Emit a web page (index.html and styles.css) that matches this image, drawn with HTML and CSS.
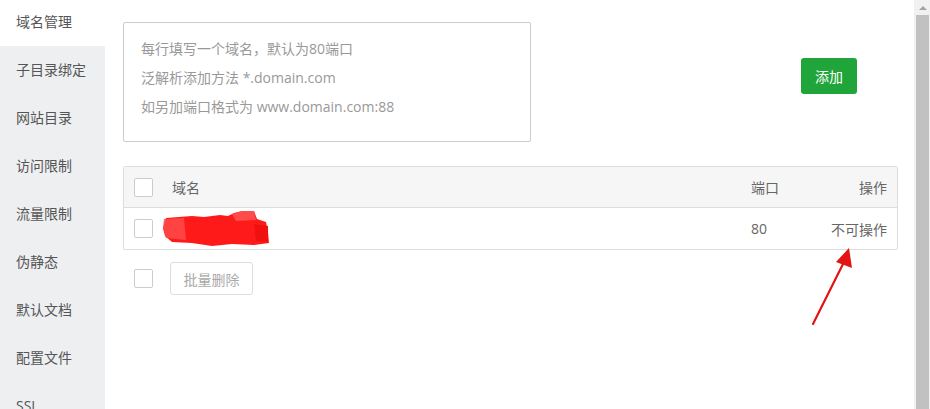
FILE: index.html
```html
<!DOCTYPE html>
<html lang="zh-CN">
<head>
<meta charset="utf-8">
<title>域名管理</title>
<link rel="stylesheet" href="styles.css">
</head>
<body>
<div class="page">
  <nav class="side">
    <div class="side-item active">域名管理</div>
    <div class="side-item">子目录绑定</div>
    <div class="side-item">网站目录</div>
    <div class="side-item">访问限制</div>
    <div class="side-item">流量限制</div>
    <div class="side-item">伪静态</div>
    <div class="side-item">默认文档</div>
    <div class="side-item">配置文件</div>
    <div class="side-item">SSL</div>
  </nav>
  <main class="main">
    <div class="add-row">
      <div class="textarea">
        <p>每行填写一个域名，默认为80端口</p>
        <p>泛解析添加方法 *.domain.com</p>
        <p>如另加端口格式为 www.domain.com:88</p>
      </div>
      <button class="btn-add">添加</button>
    </div>
    <div class="table">
      <div class="tr th">
        <span class="cb"></span>
        <span class="c-name">域名</span>
        <span class="c-port">端口</span>
        <span class="c-op">操作</span>
      </div>
      <div class="tr">
        <span class="cb"></span>
        <span class="c-name">
          <svg class="scribble" width="110" height="40" viewBox="0 0 110 40">
            <path d="M4 8 L30 6 L42 7 L58 5 L66 6 L72 3 L80 1 L92 1 L95 9 L104 12 L106 22 L107 33 L92 35 L70 34 L50 36 L30 33 L10 32 L3 26 L1 18 Z" fill="#ff1a1a"/>
            <path d="M2 9 L22 8 L24 30 L4 28 L1 18 Z" fill="#ff4a4a" opacity="0.85"/>
            <path d="M70 4 L80 1 L92 1 L94 10 L74 11 Z" fill="#ff5555" opacity="0.85"/>
            <path d="M92 14 L106 16 L106 32 L94 31 Z" fill="#f01010"/>
          </svg>
        </span>
        <span class="c-port">80</span>
        <span class="c-op">不可操作</span>
      </div>
    </div>
    <div class="batch">
      <span class="cb"></span>
      <button class="btn-batch">批量删除</button>
    </div>
    <svg class="arrow" width="60" height="90" viewBox="0 0 60 90">
      <line x1="4" y1="80" x2="36" y2="16" stroke="#e31414" stroke-width="2.2" stroke-linecap="round"/>
      <path d="M40 4 L43 24 L27 18 Z" fill="#e31414"/>
    </svg>
  </main>
  <div class="scrollbar">
    <div class="sb-up"><span class="tri"></span></div>
    <div class="sb-thumb"></div>
  </div>
</div>
</body>
</html>
```
FILE: styles.css
```css
* { box-sizing: border-box; }
html, body { margin: 0; padding: 0; }
body {
  width: 930px;
  height: 409px;
  overflow: hidden;
  font-family: "Open Sans", "Noto Sans CJK SC", sans-serif;
  font-size: 14px;
  color: #555;
  background: #fff;
}
.page {
  display: flex;
  height: 409px;
}
.side {
  width: 105px;
  flex: none;
  background: #eeeff1;
  margin-top: -2px;
}
.side-item {
  height: 48px;
  line-height: 48px;
  padding-left: 16px;
  color: #555;
  font-size: 14px;
}
.side-item.active {
  background: #fff;
}
.main {
  flex: 1;
  position: relative;
  padding: 22px 16px 0 18px;
}
.add-row {
  display: flex;
  align-items: flex-start;
}
.textarea {
  width: 408px;
  height: 120px;
  border: 1px solid #ccc;
  border-radius: 2px;
  padding: 11px 17px;
  color: #999;
  font-size: 14px;
}
.textarea p {
  margin: 0;
  line-height: 29px;
}
.btn-add {
  margin-left: 270px;
  margin-top: 36px;
  width: 56px;
  height: 36px;
  border: none;
  border-radius: 3px;
  background: #20a53a;
  color: #fff;
  font-family: inherit;
  font-size: 14px;
  padding: 0;
}
.table {
  margin-top: 24px;
  width: 775px;
  border: 1px solid #ddd;
  border-radius: 2px;
}
.tr {
  display: flex;
  align-items: center;
  height: 41px;
  padding: 0 10px;
  color: #666;
}
.tr.th {
  background: #f6f6f6;
  border-bottom: 1px solid #ddd;
}
.cb {
  width: 19px;
  height: 19px;
  border: 1px solid #ccc;
  border-radius: 2px;
  background: #fff;
  flex: none;
}
.c-name {
  flex: 1;
  margin-left: 19px;
  display: flex;
  align-items: center;
}
.scribble {
  display: block;
  margin-left: -10px;
  margin-top: 2px;
}
.c-port {
  width: 60px;
}
.c-op {
  width: 76px;
  text-align: right;
}
.batch {
  display: flex;
  align-items: center;
  margin-top: 12px;
  padding-left: 11px;
}
.btn-batch {
  margin-left: 17px;
  width: 83px;
  height: 33px;
  border: 1px solid #ddd;
  border-radius: 3px;
  background: #fff;
  color: #aaa;
  font-family: inherit;
  font-size: 14px;
  padding: 0;
}
.arrow {
  position: absolute;
  left: 704px;
  top: 244px;
}
.scrollbar {
  width: 17px;
  flex: none;
  background: #f1f1f1;
  display: flex;
  flex-direction: column;
}
.sb-up {
  height: 15px;
  display: flex;
  align-items: center;
  justify-content: center;
}
.tri {
  width: 0;
  height: 0;
  border-left: 4px solid transparent;
  border-right: 4px solid transparent;
  border-bottom: 4px solid #a3a3a3;
}
.sb-thumb {
  flex: 1;
  margin: 0 2px;
  background: #c1c1c1;
}
```
